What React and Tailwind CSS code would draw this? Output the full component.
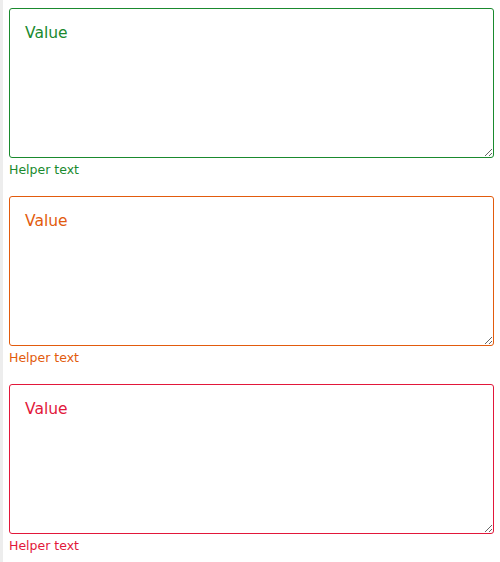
export default function App() {
  const items = [
    { b: "border-[#1a8a2e]", t: "text-[#1a8a2e]" },
    { b: "border-[#e25b0d]", t: "text-[#e25b0d]" },
    { b: "border-[#e2173a]", t: "text-[#e2173a]" },
  ];
  return (
    <div className="min-h-[562px] bg-white border-l-[3px] border-[#ededed] pl-[6px] pr-[6px] pt-[8px]" style={{ fontFamily: '"DejaVu Sans", sans-serif' }}>
      <div className="flex flex-col gap-[17px]">
        {items.map((it, i) => (
          <div key={i} className="flex flex-col">
            <textarea
              defaultValue="Value"
              className={`block w-full h-[150px] rounded-[3px] border ${it.b} ${it.t} bg-white px-[15px] pt-[12px] text-[15.5px] leading-[24px] outline-none`}
              style={{ fontFamily: '"DejaVu Sans", sans-serif' }}
            />
            <div className={`mt-[3px] text-[12.5px] leading-[18px] ${it.t}`}>Helper text</div>
          </div>
        ))}
      </div>
    </div>
  );
}
